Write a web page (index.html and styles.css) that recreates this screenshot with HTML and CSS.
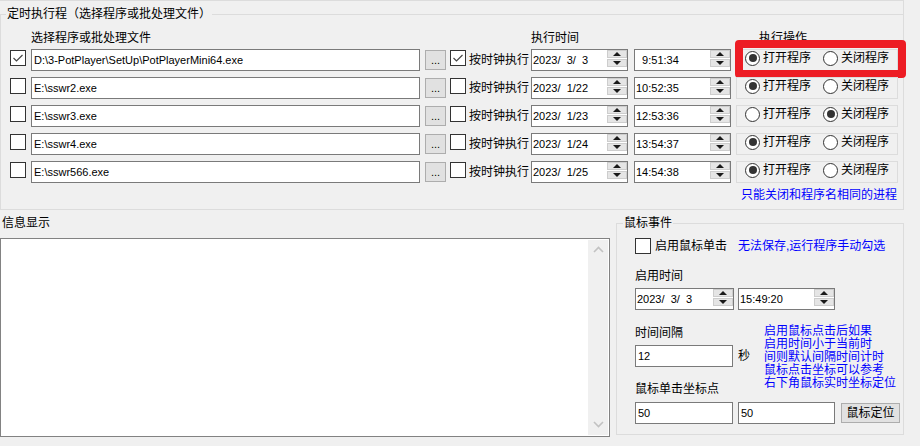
FILE: index.html
```html
<!DOCTYPE html>
<html lang="zh-CN">
<head>
<meta charset="utf-8">
<title>定时执行程</title>
<link rel="stylesheet" href="styles.css">
</head>
<body>
<div class="top-wrap">
  <fieldset class="group main-group">
    <legend>定时执行程（选择程序或批处理文件）</legend>
    <div class="main-inner">
      <div class="heads">
        <span class="h-file">选择程序或批处理文件</span>
        <span class="h-time">执行时间</span>
        <span class="h-op">执行操作</span>
      </div>
      <div class="rows">
        <div class="row">
          <span class="cb"><svg width="14" height="14" viewBox="0 0 14 14"><polyline points="2.5,7 5.5,10 11.5,4" fill="none" stroke="#444" stroke-width="1.2"/></svg></span>
          <span class="tb path">D:\3-PotPlayer\SetUp\PotPlayerMini64.exe</span>
          <span class="btn dots">...</span>
          <span class="cb cb2"><svg width="14" height="14" viewBox="0 0 14 14"><polyline points="2.5,7 5.5,10 11.5,4" fill="none" stroke="#444" stroke-width="1.2"/></svg></span>
          <span class="lbl">按时钟执行</span>
          <span class="dtp date"><span class="val">2023/&#8199;3/&#8199;3</span><span class="spin"><span class="up"></span><span class="down"></span></span></span>
          <span class="dtp time"><span class="val">&#8199;9:51:34</span><span class="spin"><span class="up"></span><span class="down"></span></span></span>
          <span class="radios">
            <span class="rb on"></span><span class="rl">打开程序</span>
            <span class="rb second"></span><span class="rl">关闭程序</span>
            <span class="hl"></span>
          </span>
        </div>
        <div class="row">
          <span class="cb"></span>
          <span class="tb path">E:\sswr2.exe</span>
          <span class="btn dots">...</span>
          <span class="cb cb2"></span>
          <span class="lbl">按时钟执行</span>
          <span class="dtp date"><span class="val">2023/&#8199;1/22</span><span class="spin"><span class="up"></span><span class="down"></span></span></span>
          <span class="dtp time"><span class="val">10:52:35</span><span class="spin"><span class="up"></span><span class="down"></span></span></span>
          <span class="radios">
            <span class="rb on"></span><span class="rl">打开程序</span>
            <span class="rb second"></span><span class="rl">关闭程序</span>
          </span>
        </div>
        <div class="row">
          <span class="cb"></span>
          <span class="tb path">E:\sswr3.exe</span>
          <span class="btn dots">...</span>
          <span class="cb cb2"></span>
          <span class="lbl">按时钟执行</span>
          <span class="dtp date"><span class="val">2023/&#8199;1/23</span><span class="spin"><span class="up"></span><span class="down"></span></span></span>
          <span class="dtp time"><span class="val">12:53:36</span><span class="spin"><span class="up"></span><span class="down"></span></span></span>
          <span class="radios">
            <span class="rb"></span><span class="rl">打开程序</span>
            <span class="rb second on"></span><span class="rl">关闭程序</span>
          </span>
        </div>
        <div class="row">
          <span class="cb"></span>
          <span class="tb path">E:\sswr4.exe</span>
          <span class="btn dots">...</span>
          <span class="cb cb2"></span>
          <span class="lbl">按时钟执行</span>
          <span class="dtp date"><span class="val">2023/&#8199;1/24</span><span class="spin"><span class="up"></span><span class="down"></span></span></span>
          <span class="dtp time"><span class="val">13:54:37</span><span class="spin"><span class="up"></span><span class="down"></span></span></span>
          <span class="radios">
            <span class="rb on"></span><span class="rl">打开程序</span>
            <span class="rb second"></span><span class="rl">关闭程序</span>
          </span>
        </div>
        <div class="row">
          <span class="cb"></span>
          <span class="tb path">E:\sswr566.exe</span>
          <span class="btn dots">...</span>
          <span class="cb cb2"></span>
          <span class="lbl">按时钟执行</span>
          <span class="dtp date"><span class="val">2023/&#8199;1/25</span><span class="spin"><span class="up"></span><span class="down"></span></span></span>
          <span class="dtp time"><span class="val">14:54:38</span><span class="spin"><span class="up"></span><span class="down"></span></span></span>
          <span class="radios">
            <span class="rb on"></span><span class="rl">打开程序</span>
            <span class="rb second"></span><span class="rl">关闭程序</span>
          </span>
        </div>
      </div>
      <div class="note">只能关闭和程序名相同的进程</div>
    </div>
  </fieldset>
</div>

<div class="bottom">
  <div class="info">
    <div class="info-title">信息显示</div>
    <div class="log">
      <div class="scroll">
        <svg width="11" height="7" viewBox="0 0 11 7"><polyline points="1,6 5.5,1.5 10,6" fill="none" stroke="#c2c2c2" stroke-width="1.6"/></svg>
        <svg width="11" height="7" viewBox="0 0 11 7"><polyline points="1,1 5.5,5.5 10,1" fill="none" stroke="#c2c2c2" stroke-width="1.6"/></svg>
      </div>
    </div>
  </div>

  <fieldset class="group mouse">
    <legend>鼠标事件</legend>
    <div class="mouse-inner">
      <div class="m-row1">
        <span class="cb m-cb"></span>
        <span class="m-cblbl">启用鼠标单击</span>
        <span class="blue m-hint">无法保存,运行程序手动勾选</span>
      </div>
      <div class="m-label">启用时间</div>
      <div class="m-dt">
        <span class="dtp m-date"><span class="val">2023/&#8199;3/&#8199;3</span><span class="spin"><span class="up"></span><span class="down"></span></span></span>
        <span class="dtp m-time"><span class="val">15:49:20</span><span class="spin"><span class="up"></span><span class="down"></span></span></span>
      </div>
      <div class="m-sec">
        <div class="m-left">
          <div class="m-label0">时间间隔</div>
          <div class="m-int">
            <span class="tb m-tb">12</span>
            <span class="sec">秒</span>
          </div>
          <div class="m-label2">鼠标单击坐标点</div>
        </div>
        <div class="blue m-notes">启用鼠标点击后如果<br>启用时间小于当前时<br>间则默认间隔时间计时<br>鼠标点击坐标可以参考<br>右下角鼠标实时坐标定位</div>
      </div>
      <div class="m-pos">
        <span class="tb m-tb">50</span>
        <span class="tb m-tb2">50</span>
        <span class="btn m-btn">鼠标定位</span>
      </div>
    </div>
  </fieldset>
</div>
</body>
</html>
```

FILE: styles.css
```css
* { box-sizing: border-box; }
html, body { margin: 0; padding: 0; }
body {
  width: 920px;
  height: 446px;
  overflow: hidden;
  background: #f0f0f0;
  font-family: "Liberation Sans", "Noto Sans CJK SC", sans-serif;
  font-size: 12px;
  line-height: 16px;
  color: #000;
}

.top-wrap {
  width: 904px;
  border-top: 1px solid #dcdcdc;
  border-right: 1px solid #dcdcdc;
}

.group {
  margin: 0;
  padding: 0;
  border: 1px solid #dcdcdc;
  min-width: 0;
}
.group > legend {
  padding: 0 1px;
  height: 16px;
  line-height: 16px;
  font-size: 12px;
}
.group.main-group { margin-top: 5px; border-right: none; }
.main-group > legend { margin-left: 5px; }

.main-inner { padding: 8px 0 6px 9px; }
.heads { display: flex; height: 16px; margin-bottom: 3px; white-space: nowrap; }
.h-file { margin-left: 21px; width: 500px; }
.h-time { width: 228px; }

.rows { display: flex; flex-direction: column; gap: 6px; }
.row { display: flex; align-items: center; height: 22px; }

.cb {
  flex: none;
  width: 16px;
  height: 16px;
  border: 1px solid #333;
  background: #fff;
  display: flex;
  align-items: center;
  justify-content: center;
  align-self: flex-start;
  margin-top: 1px;
}
.cb2 { margin-left: 4px; }

.tb {
  flex: none;
  height: 22px;
  border: 1px solid #7a7a7a;
  background: #fff;
  font-size: 11px;
  line-height: 20px;
  padding-left: 2px;
  white-space: pre;
  overflow: hidden;
}
.path { margin-left: 5px; width: 389px; }

.btn {
  flex: none;
  background: #e1e1e1;
  border: 1px solid #adadad;
  text-align: center;
  white-space: nowrap;
}
.dots {
  width: 21px;
  height: 20px;
  margin-left: 5px;
  align-self: flex-start;
  margin-top: 1px;
  font-size: 11px;
  line-height: 18px;
}

.lbl { margin-left: 3px; width: 60px; white-space: nowrap; flex: none; }

.dtp {
  flex: none;
  height: 22px;
  border: 1px solid #7a7a7a;
  background: #fff;
  display: flex;
  align-items: flex-start;
  font-size: 11px;
}
.dtp .val { flex: 1; padding-left: 1px; line-height: 20px; white-space: pre; }
.date { margin-left: 2px; width: 97px; }
.time { margin-left: 6px; width: 97px; }

.spin {
  flex: none;
  width: 20px;
  height: 17px;
  display: flex;
  flex-direction: column;
  gap: 1px;
}
.spin span {
  flex: 1;
  background: #e5e5e5;
  border: 1px solid #cdcdcd;
  display: flex;
  align-items: center;
  justify-content: center;
}
.spin .up::before {
  content: "";
  border-left: 4px solid transparent;
  border-right: 4px solid transparent;
  border-bottom: 4px solid #1a1a1a;
}
.spin .down::before {
  content: "";
  border-left: 4px solid transparent;
  border-right: 4px solid transparent;
  border-top: 4px solid #1a1a1a;
}

.radios {
  flex: none;
  position: relative;
  margin-left: 5px;
  width: 162px;
  height: 22px;
  border: 1px solid #dcdcdc;
  display: flex;
  align-items: center;
  padding: 0 0 4px 8px;
  white-space: nowrap;
}
.rb {
  flex: none;
  width: 15px;
  height: 15px;
  border: 1px solid #333;
  border-radius: 50%;
  background: #fff;
  display: flex;
  align-items: center;
  justify-content: center;
}
.rb.on::after {
  content: "";
  width: 8px;
  height: 8px;
  border-radius: 50%;
  background: #333;
}
.rb.second { margin-left: 12px; }
.rl { margin-left: 3px; }

.hl {
  position: absolute;
  left: -2px;
  top: -10px;
  width: 171px;
  height: 38px;
  border: 8px solid #ed1c24;
  border-radius: 4px;
  pointer-events: none;
}

.note {
  margin-top: 4px;
  height: 16px;
  text-align: right;
  padding-right: 6px;
  color: #0000ff;
}
.blue { color: #0000ff; }

.bottom { display: flex; margin-top: 5px; align-items: flex-start; }
.info { width: 610px; flex: none; }
.info-title { padding-left: 2px; height: 16px; }
.log {
  margin-top: 7px;
  height: 199px;
  border: 1px solid #828282;
  background: #fff;
  padding: 1px;
  display: flex;
  justify-content: flex-end;
}
.scroll {
  width: 20px;
  height: 100%;
  background: #f0f0f0;
  display: flex;
  flex-direction: column;
  justify-content: space-between;
  align-items: center;
  padding: 6px 0 7px;
}

.group.mouse { margin-left: 6px; width: 288px; height: 220px; flex: none; }
.mouse > legend { margin-left: 6px; }
.mouse-inner { padding: 7px 0 0 18px; }
.m-row1 { display: flex; align-items: center; height: 16px; white-space: nowrap; }
.m-cb { align-self: center; margin-top: 0; }
.m-cblbl { margin-left: 4px; width: 72px; }
.m-hint { margin-left: 11px; }
.m-label { margin-top: 14px; height: 16px; }
.m-dt { display: flex; margin-top: 4px; }
.m-date { width: 99px; }
.m-time { margin-left: 4px; width: 97px; }
.m-sec { display: flex; margin-top: 15px; }
.m-left { width: 129px; flex: none; }
.m-label0 { height: 16px; }
.m-int { display: flex; align-items: center; margin-top: 4px; height: 22px; }
.m-tb { width: 98px; }
.sec { margin-left: 5px; }
.m-label2 { margin-top: 14px; height: 16px; white-space: nowrap; }
.m-notes { line-height: 13px; white-space: nowrap; }
.m-pos { display: flex; margin-top: 5px; align-items: flex-start; }
.m-tb2 { margin-left: 5px; width: 97px; }
.m-btn {
  margin-left: 6px;
  margin-top: 1px;
  width: 59px;
  height: 20px;
  line-height: 18px;
  font-size: 12px;
}
```
